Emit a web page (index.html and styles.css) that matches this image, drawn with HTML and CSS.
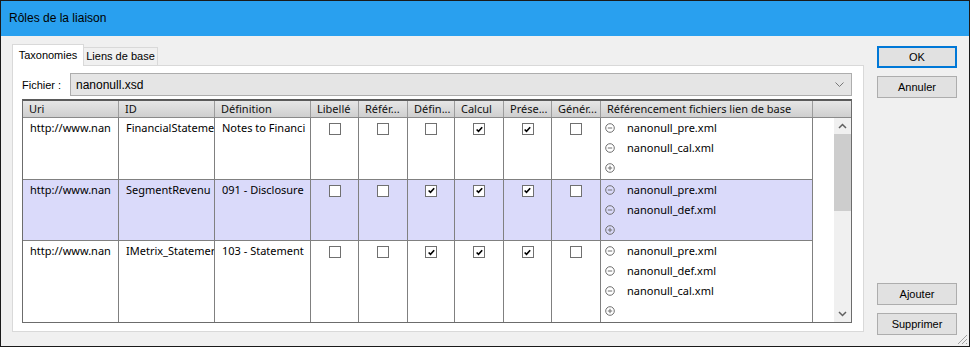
FILE: index.html
```html
<!DOCTYPE html>
<html lang="fr">
<head>
  <meta charset="UTF-8">
  <title>Rôles de la liaison</title>
  <link rel="stylesheet" href="styles.css">
</head>
<body>
  <div class="window">
    <div class="titlebar">Rôles de la liaison</div>
    <div class="main">
      <div class="tabs">
        <div class="tab-strip">
          <div class="tab active">Taxonomies</div>
          <div class="tab">Liens de base</div>
        </div>
        <div class="tab-panel">
          <div class="file-row">
            <span class="file-label">Fichier :</span>
            <div class="combo">
              <span>nanonull.xsd</span>
              <svg width="9" height="6" viewBox="0 0 9 6"><polyline points="0.5,0.5 4.5,4.5 8.5,0.5" fill="none" stroke="#777" stroke-width="1"/></svg>
            </div>
          </div>

          <div class="grid">
            <div class="grid-head">
              <div class="hc c-uri">Uri</div>
              <div class="hc c-id">ID</div>
              <div class="hc c-def">Définition</div>
              <div class="hc c-chk1">Libellé</div>
              <div class="hc c-chk2">Référ...</div>
              <div class="hc c-chk3">Défin...</div>
              <div class="hc c-chk4">Calcul</div>
              <div class="hc c-chk5">Prése...</div>
              <div class="hc c-chk6">Génér...</div>
              <div class="hc c-ref">Référencement fichiers lien de base</div>
              <div class="hc c-fill"></div>
            </div>

            <div class="grid-body">
              <div class="rows">
                <div class="row">
                  <div class="cell c-uri">http://www.nan</div>
                  <div class="cell c-id">FinancialStateme</div>
                  <div class="cell c-def">Notes to Financi</div>
                  <div class="cell chk c-chk1"><span class="box"></span></div>
                  <div class="cell chk c-chk2"><span class="box"></span></div>
                  <div class="cell chk c-chk3"><span class="box"></span></div>
                  <div class="cell chk c-chk4"><span class="box checked"><svg width="11" height="11" viewBox="0 0 11 11"><path d="M2 5.5 L4.3 7.8 L8.8 2.8" fill="none" stroke="#000" stroke-width="2"/></svg></span></div>
                  <div class="cell chk c-chk5"><span class="box checked"><svg width="11" height="11" viewBox="0 0 11 11"><path d="M2 5.5 L4.3 7.8 L8.8 2.8" fill="none" stroke="#000" stroke-width="2"/></svg></span></div>
                  <div class="cell chk c-chk6"><span class="box"></span></div>
                  <div class="cell c-ref">
                    <div class="file"><svg class="ico" width="10" height="10" viewBox="0 0 10 10"><circle cx="5" cy="5" r="4.3" fill="none" stroke="#707070"/><line x1="2.8" y1="5" x2="7.2" y2="5" stroke="#707070"/></svg>nanonull_pre.xml</div>
                    <div class="file"><svg class="ico" width="10" height="10" viewBox="0 0 10 10"><circle cx="5" cy="5" r="4.3" fill="none" stroke="#707070"/><line x1="2.8" y1="5" x2="7.2" y2="5" stroke="#707070"/></svg>nanonull_cal.xml</div>
                    <div class="file"><svg class="ico" width="10" height="10" viewBox="0 0 10 10"><circle cx="5" cy="5" r="4.3" fill="none" stroke="#707070"/><line x1="2.8" y1="5" x2="7.2" y2="5" stroke="#707070"/><line x1="5" y1="2.8" x2="5" y2="7.2" stroke="#707070"/></svg></div>
                  </div>
                </div>

                <div class="row selected">
                  <div class="cell c-uri">http://www.nan</div>
                  <div class="cell c-id">SegmentRevenu</div>
                  <div class="cell c-def">091 - Disclosure</div>
                  <div class="cell chk c-chk1"><span class="box"></span></div>
                  <div class="cell chk c-chk2"><span class="box"></span></div>
                  <div class="cell chk c-chk3"><span class="box checked"><svg width="11" height="11" viewBox="0 0 11 11"><path d="M2 5.5 L4.3 7.8 L8.8 2.8" fill="none" stroke="#000" stroke-width="2"/></svg></span></div>
                  <div class="cell chk c-chk4"><span class="box checked"><svg width="11" height="11" viewBox="0 0 11 11"><path d="M2 5.5 L4.3 7.8 L8.8 2.8" fill="none" stroke="#000" stroke-width="2"/></svg></span></div>
                  <div class="cell chk c-chk5"><span class="box checked"><svg width="11" height="11" viewBox="0 0 11 11"><path d="M2 5.5 L4.3 7.8 L8.8 2.8" fill="none" stroke="#000" stroke-width="2"/></svg></span></div>
                  <div class="cell chk c-chk6"><span class="box"></span></div>
                  <div class="cell c-ref">
                    <div class="file"><svg class="ico" width="10" height="10" viewBox="0 0 10 10"><circle cx="5" cy="5" r="4.3" fill="none" stroke="#707070"/><line x1="2.8" y1="5" x2="7.2" y2="5" stroke="#707070"/></svg>nanonull_pre.xml</div>
                    <div class="file"><svg class="ico" width="10" height="10" viewBox="0 0 10 10"><circle cx="5" cy="5" r="4.3" fill="none" stroke="#707070"/><line x1="2.8" y1="5" x2="7.2" y2="5" stroke="#707070"/></svg>nanonull_def.xml</div>
                    <div class="file"><svg class="ico" width="10" height="10" viewBox="0 0 10 10"><circle cx="5" cy="5" r="4.3" fill="none" stroke="#707070"/><line x1="2.8" y1="5" x2="7.2" y2="5" stroke="#707070"/><line x1="5" y1="2.8" x2="5" y2="7.2" stroke="#707070"/></svg></div>
                  </div>
                </div>

                <div class="row last">
                  <div class="cell c-uri">http://www.nan</div>
                  <div class="cell c-id">IMetrix_Statemer</div>
                  <div class="cell c-def">103 - Statement</div>
                  <div class="cell chk c-chk1"><span class="box"></span></div>
                  <div class="cell chk c-chk2"><span class="box"></span></div>
                  <div class="cell chk c-chk3"><span class="box checked"><svg width="11" height="11" viewBox="0 0 11 11"><path d="M2 5.5 L4.3 7.8 L8.8 2.8" fill="none" stroke="#000" stroke-width="2"/></svg></span></div>
                  <div class="cell chk c-chk4"><span class="box checked"><svg width="11" height="11" viewBox="0 0 11 11"><path d="M2 5.5 L4.3 7.8 L8.8 2.8" fill="none" stroke="#000" stroke-width="2"/></svg></span></div>
                  <div class="cell chk c-chk5"><span class="box checked"><svg width="11" height="11" viewBox="0 0 11 11"><path d="M2 5.5 L4.3 7.8 L8.8 2.8" fill="none" stroke="#000" stroke-width="2"/></svg></span></div>
                  <div class="cell chk c-chk6"><span class="box"></span></div>
                  <div class="cell c-ref">
                    <div class="file"><svg class="ico" width="10" height="10" viewBox="0 0 10 10"><circle cx="5" cy="5" r="4.3" fill="none" stroke="#707070"/><line x1="2.8" y1="5" x2="7.2" y2="5" stroke="#707070"/></svg>nanonull_pre.xml</div>
                    <div class="file"><svg class="ico" width="10" height="10" viewBox="0 0 10 10"><circle cx="5" cy="5" r="4.3" fill="none" stroke="#707070"/><line x1="2.8" y1="5" x2="7.2" y2="5" stroke="#707070"/></svg>nanonull_def.xml</div>
                    <div class="file"><svg class="ico" width="10" height="10" viewBox="0 0 10 10"><circle cx="5" cy="5" r="4.3" fill="none" stroke="#707070"/><line x1="2.8" y1="5" x2="7.2" y2="5" stroke="#707070"/></svg>nanonull_cal.xml</div>
                    <div class="file"><svg class="ico" width="10" height="10" viewBox="0 0 10 10"><circle cx="5" cy="5" r="4.3" fill="none" stroke="#707070"/><line x1="2.8" y1="5" x2="7.2" y2="5" stroke="#707070"/><line x1="5" y1="2.8" x2="5" y2="7.2" stroke="#707070"/></svg></div>
                  </div>
                </div>
              </div>

              <div class="filler"></div>

              <div class="scrollbar">
                <div class="sb-arrow"><svg width="9" height="6" viewBox="0 0 9 6"><polyline points="1,5 4.5,1.5 8,5" fill="none" stroke="#606060" stroke-width="1.5"/></svg></div>
                <div class="sb-thumb"></div>
                <div class="sb-track"></div>
                <div class="sb-arrow"><svg width="9" height="6" viewBox="0 0 9 6"><polyline points="1,1 4.5,4.5 8,1" fill="none" stroke="#606060" stroke-width="1.5"/></svg></div>
              </div>
            </div>
          </div>
        </div>
      </div>

      <div class="buttons">
        <button class="btn default">OK</button>
        <button class="btn">Annuler</button>
        <div class="spacer"></div>
        <button class="btn">Ajouter</button>
        <button class="btn">Supprimer</button>
      </div>
    </div>

    <svg class="grip" width="12" height="12" viewBox="0 0 12 12">
      <line x1="11" y1="2" x2="2" y2="11" stroke="#a0a0a0"/>
      <line x1="11" y1="6" x2="6" y2="11" stroke="#a0a0a0"/>
      <line x1="11" y1="10" x2="10" y2="11" stroke="#a0a0a0"/>
    </svg>
  </div>
</body>
</html>
```

FILE: styles.css
```css
body { margin: 0; background: #f0f0f0; font-family: "Liberation Sans", Arial, sans-serif; font-size: 11px; color: #000; }
.window { position: relative; width: 970px; height: 347px; box-sizing: border-box; border: 1px solid #1a1a1a; background: #f0f0f0; display: flex; flex-direction: column; }
.titlebar { height: 35px; line-height: 35px; padding-left: 8px; background: #29a0ef; font-size: 12px; }

.main { flex: 1; display: flex; padding: 8px 12px 14px 11px; min-height: 0; }
.tabs { width: 852px; display: flex; flex-direction: column; }
.tab-strip { display: flex; align-items: flex-end; height: 21px; }
.tab { box-sizing: border-box; height: 18px; line-height: 17px; width: 74px; text-align: center; background: #f0f0f0; border: 1px solid #d9d9d9; border-bottom: none; border-left: none; }
.tab.active { position: relative; z-index: 1; width: 72px; height: 22px; line-height: 21px; margin-bottom: -1px; background: #fff; border-left: 1px solid #d9d9d9; }
.tab-panel { box-sizing: border-box; height: 267px; background: #fff; border: 1px solid #d9d9d9; padding: 7px 11px 0 9px; }

.file-row { display: flex; align-items: center; height: 23px; }
.file-label { width: 48px; }
.combo { flex: 1; box-sizing: border-box; height: 23px; display: flex; align-items: center; justify-content: space-between; padding: 0 7px 0 5px; background: #e5e5e5; border: 1px solid #adadad; font-size: 12px; }

.grid { margin-top: 3px; box-sizing: border-box; height: 224px; border: 1px solid #6c6c6c; border-top: 2px solid #5a5a5a; font-family: "Noto Sans", "Liberation Sans", sans-serif; font-size: 11px; display: flex; flex-direction: column; }
.grid-head { display: flex; height: 16px; border-bottom: 1px solid #8a8a8a; background: linear-gradient(#e6e6e6, #cfcfcf); }
.hc { box-sizing: border-box; line-height: 15px; padding-left: 6px; border-right: 1px solid #9c9c9c; white-space: nowrap; overflow: hidden; color: #111; }
.hc.c-fill { flex: 1; border-right: none; }

.c-uri, .c-id, .c-def { width: 96px; flex: none; }
.c-chk1 { width: 48px; flex: none; }
.c-chk2 { width: 49px; flex: none; }
.c-chk3 { width: 47px; flex: none; }
.c-chk4 { width: 49px; flex: none; }
.c-chk5 { width: 48px; flex: none; }
.c-chk6 { width: 49px; flex: none; }
.c-ref { width: 212px; flex: none; }

.grid-body { flex: 1; display: flex; background: #fff; min-height: 0; }
.rows { width: 790px; display: flex; flex-direction: column; }
.row { display: flex; height: 62px; box-sizing: border-box; border-bottom: 1px solid #808080; }
.row.selected { background: #dadafa; }
.row.last { height: 81px; border-bottom: none; }
.cell { box-sizing: border-box; border-right: 1px solid #808080; line-height: 20px; padding-left: 7px; white-space: nowrap; overflow: hidden; }
.cell.chk { display: flex; justify-content: center; padding: 5px 0 0; }
.box { box-sizing: border-box; width: 12px; height: 12px; border: 1px solid #707070; background: #fff; display: flex; align-items: center; justify-content: center; }
.box svg { width: 9px; height: 9px; }
.cell.c-ref { padding-left: 4px; }
.file { display: flex; align-items: center; height: 20px; }
.ico { margin-right: 12px; flex: none; }

.filler { width: 21px; }
.scrollbar { width: 17px; display: flex; flex-direction: column; background: #f0f0f0; }
.sb-arrow { height: 16px; display: flex; align-items: center; justify-content: center; }
.sb-thumb { height: 77px; background: #cdcdcd; }
.sb-track { flex: 1; }

.buttons { width: 80px; margin-left: 13px; margin-bottom: -3px; display: flex; flex-direction: column; gap: 8px; padding-top: 2px; }
.spacer { flex: 1; }
.btn { box-sizing: border-box; height: 22px; width: 80px; background: #e1e1e1; border: 1px solid #adadad; font-family: "Liberation Sans", Arial, sans-serif; font-size: 11px; color: #000; padding: 0; }
.btn.default { border: 2px solid #0078d7; }
.grip { position: absolute; right: 1px; bottom: 1px; }
```
